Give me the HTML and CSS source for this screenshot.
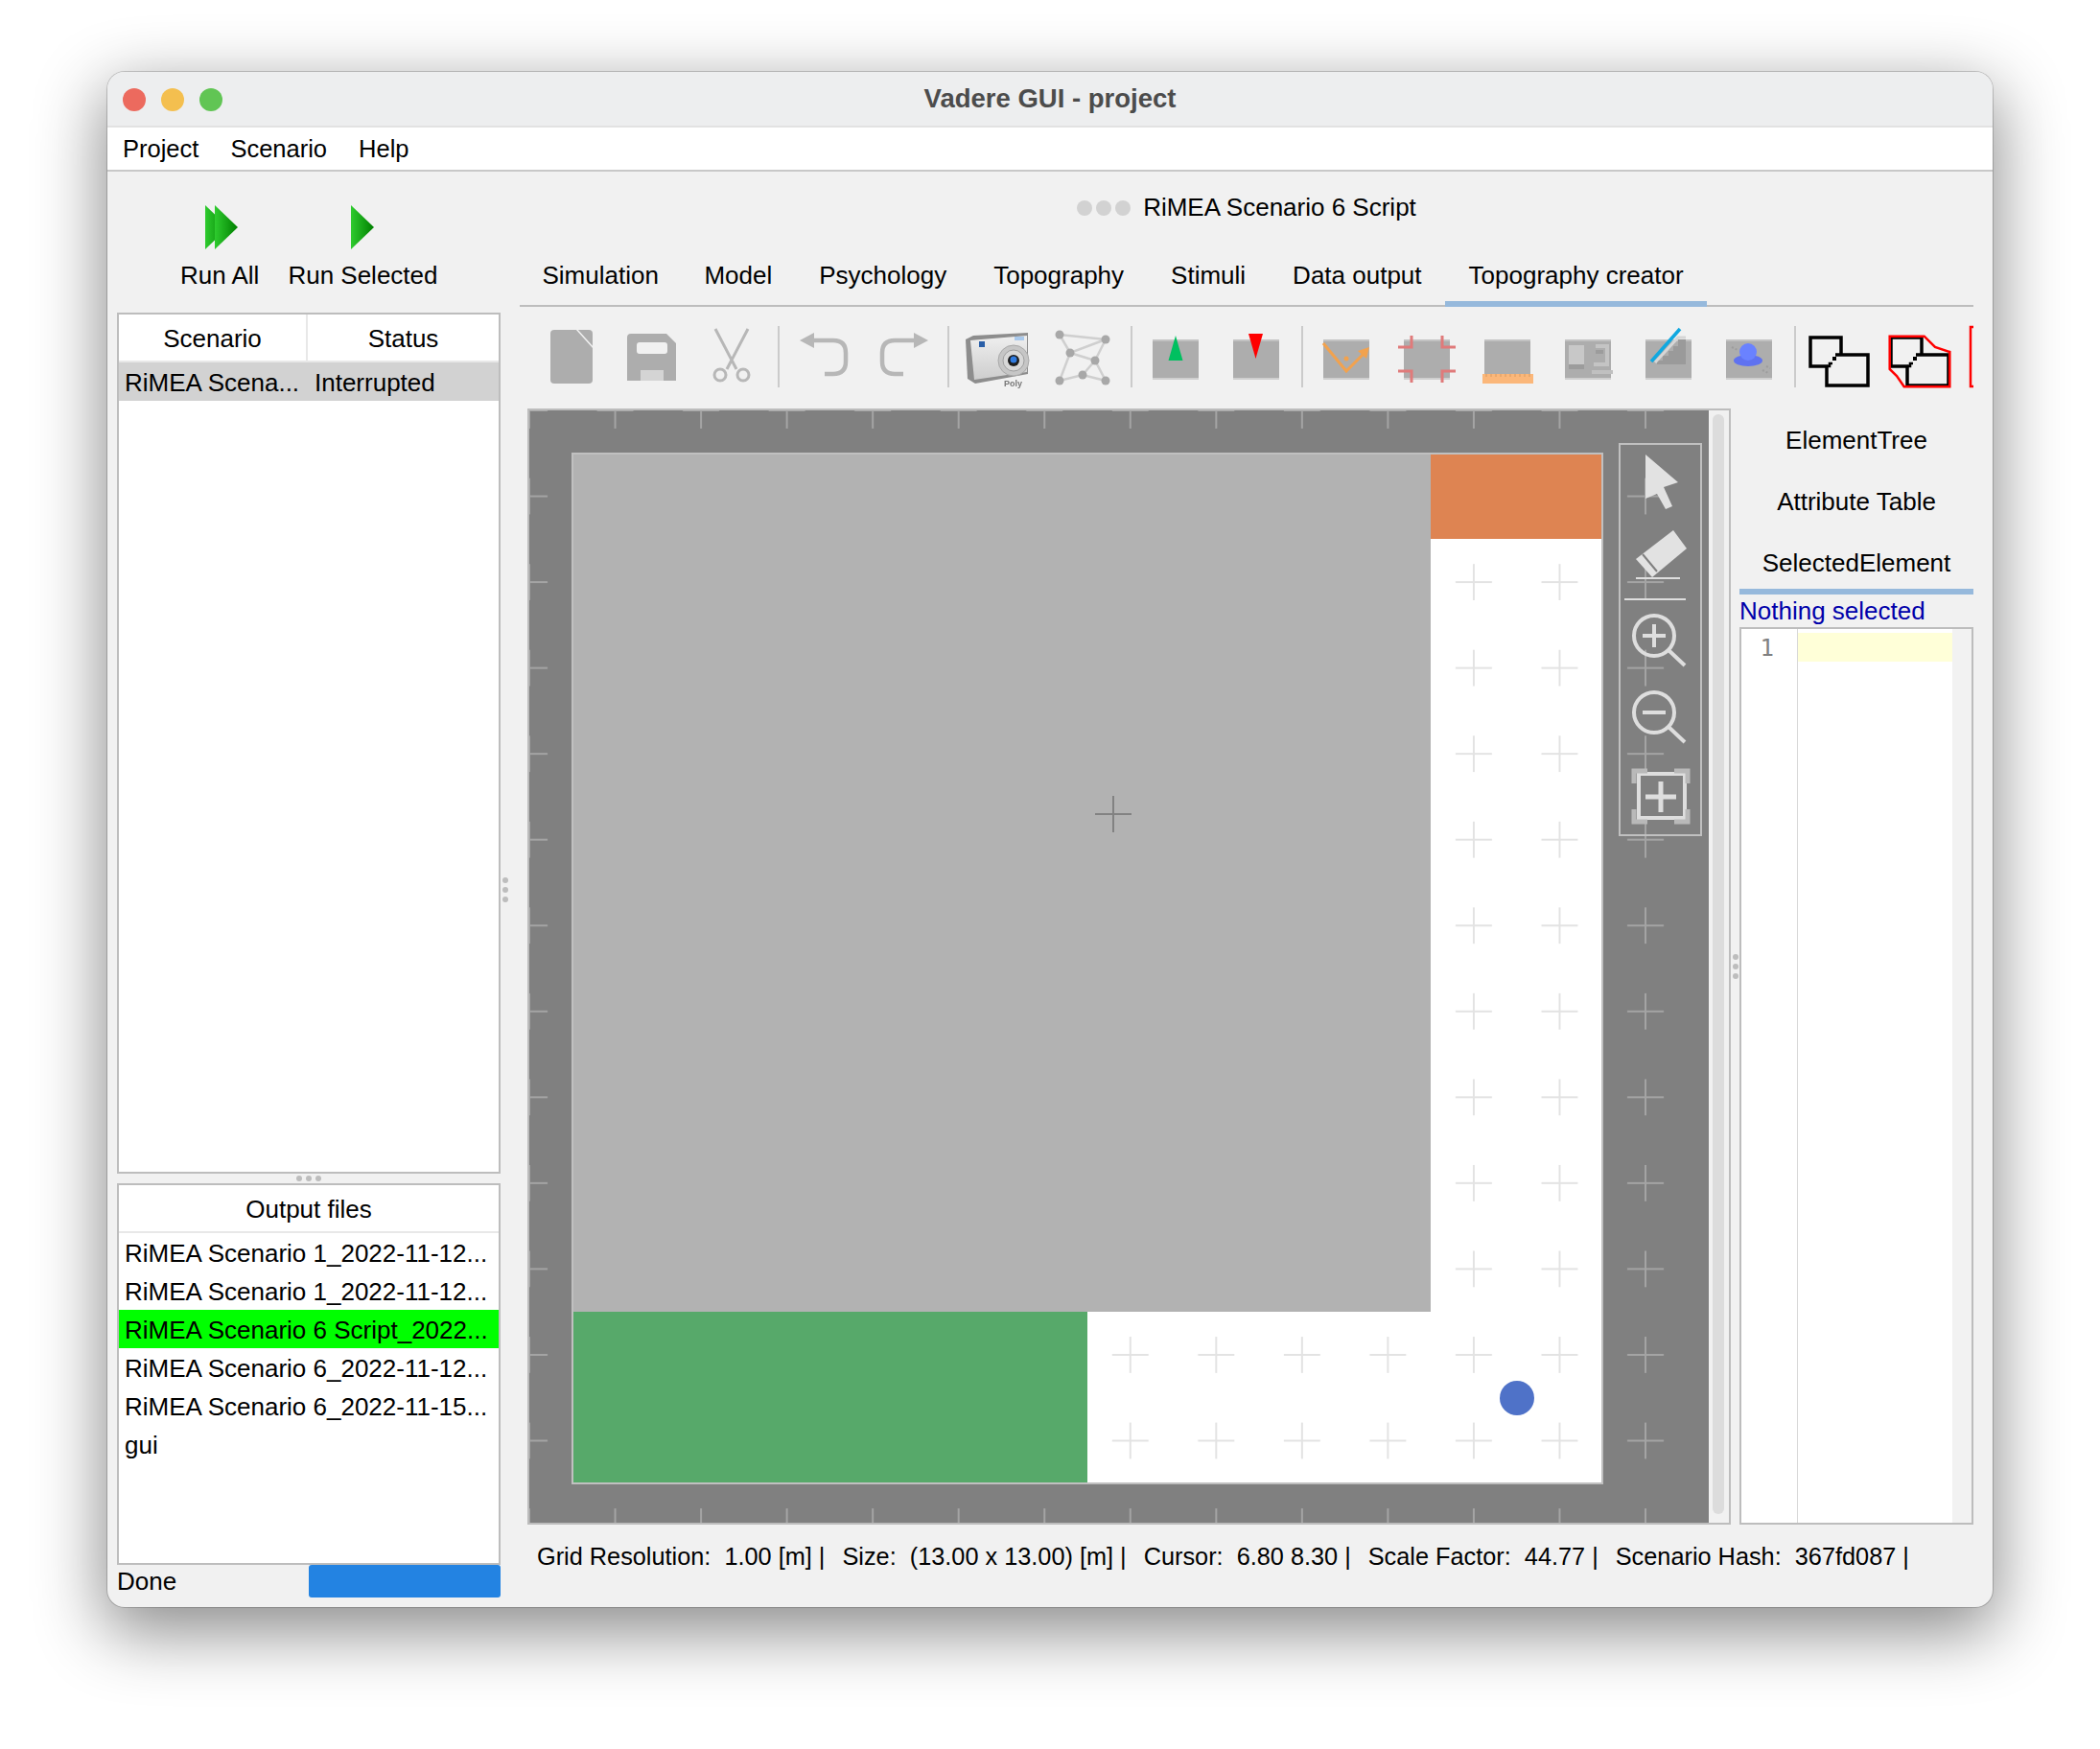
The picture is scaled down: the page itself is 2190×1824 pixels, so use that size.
FILE: index.html
```html
<!DOCTYPE html>
<html lang="en">
<head>
  <meta charset="UTF-8" />
  <title>Vadere GUI - project</title>
  <link rel="stylesheet" href="styles.css">
</head>
<body>

  <svg class="defs" width="0" height="0">
    <defs>
      <linearGradient id="runGreen" x1="0" y1="0" x2="1" y2="0">
        <stop offset="0" stop-color="#2ecb2e" />
        <stop offset="1" stop-color="#007f00" />
      </linearGradient>
      <linearGradient id="camBody" x1="0" y1="0" x2="0" y2="1">
        <stop offset="0" stop-color="#efefef" />
        <stop offset="1" stop-color="#cdcdcd" />
      </linearGradient>
      <pattern id="gridCross" patternUnits="userSpaceOnUse" x="-44.77" y="-44.77" width="89.54" height="89.54">
        <path d="M25.77 44.77H63.77M44.77 25.77V63.77" stroke="rgba(200,200,200,0.5)" stroke-width="2" fill="none" />
      </pattern>
      <g id="tile">
        <rect x="18" y="14" width="48" height="42" fill="#adadad" />
        <rect x="18" y="14" width="48" height="2" fill="#c2c2c2" />
        <rect x="18" y="54" width="48" height="2" fill="#cfcfcf" />
      </g>
    </defs>
  </svg>

  <div class="window">
    <div class="titlebar">
      <div class="lights">
        <span class="light red"></span>
        <span class="light yellow"></span>
        <span class="light green"></span>
      </div>
      <div class="wintitle">Vadere GUI - project</div>
    </div>

    <div class="menubar">
      <span>Project</span>
      <span>Scenario</span>
      <span>Help</span>
    </div>

    <div class="main">
      <div class="left">
        <div class="runbar">
          <div class="runbtn">
            <svg class="run-all" width="34" height="46" viewBox="0 0 34 46">
              <path d="M0 0L24 23L0 46Z" fill="url(#runGreen)" />
              <path d="M10 0L34 23L10 46Z" fill="url(#runGreen)" />
            </svg>
            <span>Run All</span>
          </div>
          <div class="runbtn">
            <svg width="24" height="46" viewBox="0 0 24 46">
              <path d="M0 0L24 23L0 46Z" fill="url(#runGreen)" />
            </svg>
            <span>Run Selected</span>
          </div>
        </div>

        <div class="box scenarios">
          <div class="thead two">
            <div>Scenario</div>
            <div>Status</div>
          </div>
          <div class="trow two selected">
            <div>RiMEA Scena...</div>
            <div>Interrupted</div>
          </div>
        </div>

        <div class="grip grip-h"><i></i><i></i><i></i></div>

        <div class="box outputs">
          <div class="thead"><div>Output files</div></div>
          <div class="trow"><div>RiMEA Scenario 1_2022-11-12...</div></div>
          <div class="trow"><div>RiMEA Scenario 1_2022-11-12...</div></div>
          <div class="trow running"><div>RiMEA Scenario 6 Script_2022...</div></div>
          <div class="trow"><div>RiMEA Scenario 6_2022-11-12...</div></div>
          <div class="trow"><div>RiMEA Scenario 6_2022-11-15...</div></div>
          <div class="trow"><div>gui</div></div>
        </div>

        <div class="progress">
          <span>Done</span>
          <div class="bar"></div>
        </div>
      </div>

      <div class="grip grip-v left-grip"><i></i><i></i><i></i></div>

      <div class="right">
        <div class="scenario-title">
          <div class="grip"><i></i><i></i><i></i></div>
          <span>RiMEA Scenario 6 Script</span>
        </div>

        <div class="tabs">
          <div class="tab first">Simulation</div>
          <div class="tab">Model</div>
          <div class="tab">Psychology</div>
          <div class="tab">Topography</div>
          <div class="tab">Stimuli</div>
          <div class="tab">Data output</div>
          <div class="tab active">Topography creator</div>
        </div>

        <div class="toolbar">
          <!-- new file -->
          <svg class="tool" viewBox="0 0 84 64">
            <rect x="20" y="4" width="44" height="56" rx="4" fill="#adadad" />
            <path d="M47 3L65 23" stroke="#f1f1f1" stroke-width="1.5" />
          </svg>
          <!-- save -->
          <svg class="tool" viewBox="0 0 84 64">
            <path d="M16 12Q16 8 20 8H57L67 18V57H16Z" fill="#adadad" />
            <rect x="26" y="17" width="32" height="12" rx="3" fill="#f1f1f1" />
            <rect x="30" y="46" width="24" height="11" fill="#d4d4d4" />
          </svg>
          <!-- cut -->
          <svg class="tool line" viewBox="0 0 84 64">
            <path d="M24 3L46 45M58 3L36 45" />
            <circle cx="29" cy="51" r="6" />
            <circle cx="53" cy="51" r="6" />
          </svg>
          <span class="sep sep-a"></span>
          <!-- undo -->
          <svg class="tool line thick" viewBox="0 0 84 64">
            <path d="M30 15H52Q65 15 65 28V37Q65 50 52 50H43" />
            <path class="solid" d="M17 15L32 7V23Z" />
          </svg>
          <!-- redo -->
          <svg class="tool line thick" viewBox="0 0 84 64">
            <g transform="translate(84,0) scale(-1,1)">
              <path d="M30 15H52Q65 15 65 28V37Q65 50 52 50H43" />
              <path class="solid" d="M17 15L32 7V23Z" />
            </g>
          </svg>
          <span class="sep sep-b"></span>
          <!-- camera -->
          <svg class="tool soft" viewBox="0 0 84 64">
            <path d="M10 14L18 10L75 7V50L20 60L12 55Z" fill="#8d8d8d" />
            <path d="M15 15L74 10V48L19 56Z" fill="url(#camBody)" />
            <rect x="24" y="16" width="6" height="6" fill="#2a5fa8" />
            <rect x="61" y="11" width="10" height="4" fill="#a9c9ec" />
            <circle cx="60" cy="36" r="16" fill="#c6c6c6" stroke="#a8a8a8" />
            <circle cx="60" cy="36" r="11" fill="#d8d8d8" stroke="#a0a0a0" />
            <circle cx="60" cy="36" r="6" fill="#1c1c1c" />
            <circle cx="60" cy="35" r="3.5" fill="#2f7be0" />
            <text class="polytext" x="50" y="63">Poly</text>
          </svg>
          <!-- network -->
          <svg class="tool net soft" viewBox="0 0 84 64">
            <path class="edges" d="M18 9L66 14L29 28L18 9M29 28L55 36L66 14M29 28L18 57L42 51L66 57L55 36L42 51" />
            <circle cx="18" cy="9" r="4.5" />
            <circle cx="66" cy="14" r="4.5" />
            <circle cx="29" cy="28" r="4.5" />
            <circle cx="55" cy="36" r="4.5" />
            <circle cx="42" cy="51" r="4.5" />
            <circle cx="18" cy="57" r="4.5" />
            <circle cx="66" cy="57" r="4.5" />
          </svg>
          <span class="sep sep-c"></span>
          <!-- add pedestrian up -->
          <svg class="tool" viewBox="0 0 84 64">
            <use href="#tile" />
            <path d="M42 10L49.500 36H34.500Z" fill="#00c060" />
          </svg>
          <!-- add pedestrian down -->
          <svg class="tool" viewBox="0 0 84 64">
            <use href="#tile" />
            <path d="M34 8H49L41.500 34Z" fill="#ff0000" />
          </svg>
          <span class="sep sep-d"></span>
          <!-- source path -->
          <svg class="tool" viewBox="0 0 84 64">
            <use href="#tile" />
            <path d="M18 18L42 47L62 27" fill="none" stroke="#f2a24e" stroke-width="3" />
            <path d="M66 22L54 26L63 34Z" fill="#f2a24e" />
            <circle cx="42" cy="34" r="2.500" fill="#f2a24e" />
          </svg>
          <!-- crop marks -->
          <svg class="tool" viewBox="0 0 84 64">
            <use href="#tile" />
            <path d="M12 22H26V10M72 22H58V10M12 47H26V59M72 47H58V59" fill="none" stroke="#e07a7a" stroke-width="3" />
          </svg>
          <!-- ruler -->
          <svg class="tool" viewBox="0 0 84 64">
            <use href="#tile" />
            <rect x="16" y="50" width="53" height="10" fill="#fbb77a" />
            <path d="M20 50v3M25 50v3M30 50v3M35 50v3M40 50v3M45 50v3M50 50v3M55 50v3M60 50v3M65 50v3" stroke="#d89a60" stroke-width="1" />
          </svg>
          <!-- blocks -->
          <svg class="tool" viewBox="0 0 84 64">
            <use href="#tile" />
            <rect x="22" y="20" width="16" height="20" fill="#c8c8c8" />
            <rect x="22" y="40" width="16" height="5" fill="#9c9c9c" />
            <path d="M50 21H62V40H48" fill="none" stroke="#c4c4c4" stroke-width="4" />
            <rect x="50" y="25" width="8" height="4" fill="#9c9c9c" />
            <rect x="46" y="46" width="22" height="4" fill="#c0c0c0" />
          </svg>
          <!-- stairs -->
          <svg class="tool" viewBox="0 0 84 64">
            <use href="#tile" />
            <path d="M30 40V36H36V31H42V26H47V21H52V14H60V40Z" fill="#9a9a9a" />
            <path d="M28 38L52 12H60" fill="none" stroke="#d6d6d6" stroke-width="3" />
            <path d="M24 37L54 3" stroke="#10a8e0" stroke-width="3.500" />
          </svg>
          <!-- hat -->
          <svg class="tool" viewBox="0 0 84 64">
            <use href="#tile" />
            <ellipse cx="41" cy="36" rx="15" ry="6" fill="#5f72f0" />
            <ellipse cx="41" cy="27" rx="9" ry="9" fill="#6a82ff" />
            <path d="M24 22l6 3M56 46l6 3M60 42l4 2" stroke="#9c9c9c" stroke-width="2" stroke-dasharray="2 2" />
          </svg>
          <span class="sep sep-d"></span>
          <!-- merge -->
          <svg class="tool" viewBox="0 0 84 64">
            <path d="M38 30H44V12H12V42H29V62H72V30H44" fill="none" stroke="#000" stroke-width="3.500" />
            <path d="M29 42H32V39H35" fill="none" stroke="#000" stroke-width="2.500" />
            <rect x="35" y="32" width="4" height="4" fill="#000" />
          </svg>
          <!-- convex hull -->
          <svg class="tool" viewBox="0 0 84 64">
            <path d="M38 30H44V12H12V42H29V62H72V30H44" fill="none" stroke="#000" stroke-width="3.500" />
            <path d="M29 42H32V39H35" fill="none" stroke="#000" stroke-width="2.500" />
            <rect x="35" y="32" width="4" height="4" fill="#000" />
            <path d="M10.700 10.700H46.700L58 22L73.300 27V63.300H25.700L18 52L10.700 45Z" fill="none" stroke="#ff0000" stroke-width="2.500" />
          </svg>
          <!-- cut off by the window -->
          <svg class="tool" viewBox="0 0 84 64">
            <path d="M16 1H11V63H16" fill="none" stroke="#ff0000" stroke-width="2.500" />
          </svg>
        </div>

        <div class="workspace">
          <div class="canvas-frame">
            <svg class="canvas" width="1230" height="1160" viewBox="0 0 1230 1160">
              <rect width="1230" height="1160" fill="#808080" />
              <rect x="45" y="45" width="1074" height="1074" fill="#fff" stroke="#c0c0c0" stroke-width="2" />
              <rect width="1230" height="1160" fill="url(#gridCross)" />
              <rect x="46" y="46" width="894" height="894" fill="#b2b2b2" />
              <rect x="940" y="46" width="178" height="88" fill="#de8452" />
              <rect x="46" y="940" width="536" height="178" fill="#57a96a" />
              <circle cx="1030" cy="1030" r="18" fill="#4f72c8" />
              <path d="M590 421H628M609 402V440" stroke="#828282" stroke-width="2" />
            </svg>
            <div class="scrollbar"><div class="thumb"></div></div>

            <div class="toolbox">
              <svg width="87" height="410" viewBox="0 0 87 410">
                <path class="fill" d="M28 12L62 41L47 46L56 66L49 69L40 53L28 58Z" />
                <path class="fill" d="M57 91L71 110L35 140L18 121Z" />
                <path d="M25 116L40 134" stroke="#808080" stroke-width="2" />
                <path class="stroke thin" d="M18 141H64M6 163H70" />
                <circle class="stroke" cx="37" cy="201" r="21" />
                <path class="stroke" d="M25 201H49M37 189V213M52 216L69 232" />
                <circle class="stroke" cx="37" cy="281" r="21" />
                <path class="stroke" d="M25 281H49M52 296L69 312" />
                <rect class="stroke" x="21" y="345" width="48" height="46" />
                <path class="stroke bold" d="M28 369H60M44 353V385" />
                <path class="corners" d="M16 355V342H30M58 342H72V355M16 382V395H30M58 395H72V382" />
              </svg>
            </div>
          </div>

          <div class="grip grip-v"><i></i><i></i><i></i></div>

          <div class="side">
            <div class="side-tab">ElementTree</div>
            <div class="side-tab">Attribute Table</div>
            <div class="side-tab">SelectedElement</div>
            <div class="side-rule"></div>
            <div class="side-label">Nothing selected</div>
            <div class="editor">
              <div class="gutter">1</div>
              <div class="code"><div class="current-line"></div></div>
              <div class="editor-strip"></div>
            </div>
          </div>
        </div>

        <div class="statusbar">
          <span>Grid Resolution:  1.00 [m] |</span>
          <span>Size:  (13.00 x 13.00) [m] |</span>
          <span>Cursor:  6.80 8.30 |</span>
          <span>Scale Factor:  44.77 |</span>
          <span>Scenario Hash:  367fd087 |</span>
        </div>
      </div>
    </div>
  </div>
</body>
</html>
```

FILE: styles.css
```css
* {
  box-sizing: border-box;
}
body {
  margin: 0;
  min-height: 1824px;
  padding: 75px 0 0 112px;
  background: #fff;
  font-family: "Liberation Sans", Arial, sans-serif;
  font-size: 26px;
  color: #000;
}
.defs {
  position: absolute;
}

.window {
  width: 1966px;
  height: 1601px;
  background: #f1f1f1;
  border-radius: 18px;
  box-shadow: 0 0 0 1px rgba(0,0,0,0.18), 0 22px 70px 4px rgba(0,0,0,0.46);
  display: flex;
  flex-direction: column;
  overflow: hidden;
}

.titlebar {
  height: 58px;
  flex: none;
  display: flex;
  align-items: center;
  justify-content: center;
  background: #edeeef;
  border-bottom: 2px solid #e2e2e2;
  position: relative;
}
.lights {
  position: absolute;
  left: 16px;
  top: 17px;
  display: flex;
  gap: 16px;
}
.light {
  width: 24px;
  height: 24px;
  border-radius: 50%;
}
.light.red { background: #ec6a5e; }
.light.yellow { background: #f4bf4f; }
.light.green { background: #61c554; }
.wintitle {
  font-size: 27.5px;
  font-weight: bold;
  color: #4c4c4c;
}

.menubar {
  height: 46px;
  flex: none;
  display: flex;
  align-items: center;
  gap: 33px;
  padding-left: 16px;
  background: #fff;
  border-bottom: 2px solid #c8c8c8;
  font-size: 25.5px;
}

.main {
  flex: 1;
  display: flex;
  min-height: 0;
  padding-left: 10px;
}

/* left column */
.left {
  width: 400px;
  flex: none;
  display: flex;
  flex-direction: column;
}
.runbar {
  height: 147px;
  flex: none;
  display: flex;
  gap: 30px;
  padding: 35px 0 0 66px;
}
.runbtn {
  display: flex;
  flex-direction: column;
  align-items: center;
  gap: 12px;
  line-height: 30px;
}
.run-all {
  margin-left: 3px;
}
.box {
  background: #fff;
  border: 2px solid #bdbdbd;
}
.scenarios {
  height: 898px;
  flex: none;
}
.outputs {
  height: 398px;
  flex: none;
}
.thead {
  height: 50px;
  display: flex;
  align-items: center;
  justify-content: center;
  text-align: center;
  border-bottom: 2px solid #e8e8e8;
}
.thead div {
  flex: 1;
  height: 48px;
  line-height: 50px;
}
.thead.two div:first-child {
  flex: none;
  width: 197px;
  border-right: 2px solid #e8e8e8;
}
.trow {
  height: 40px;
  line-height: 42px;
  padding-left: 6px;
  white-space: nowrap;
}
.trow.two {
  display: flex;
}
.trow.two div:first-child {
  width: 198px;
}
.trow.selected {
  background: #d2d2d2;
}
.trow.running {
  background: #00ff00;
}
.progress {
  flex: none;
  height: 34px;
  display: flex;
  align-items: center;
  justify-content: space-between;
}
.bar {
  width: 200px;
  height: 34px;
  background: #2383e2;
  border-radius: 3px;
}

/* little dot handles between panes */
.grip {
  display: flex;
  justify-content: center;
  align-items: center;
  gap: 4px;
}
.grip i {
  width: 6px;
  height: 6px;
  border-radius: 50%;
  background: #bdbdbd;
}
.grip-h {
  height: 10px;
  flex: none;
}
.grip-v {
  flex-direction: column;
  flex: none;
  width: 9px;
}
.left-grip {
  width: 20px;
  padding-right: 11px;
}

/* right column */
.right {
  width: 1516px;
  flex: none;
  display: flex;
  flex-direction: column;
  min-height: 0;
}
.scenario-title {
  height: 73px;
  flex: none;
  display: flex;
  align-items: center;
  justify-content: center;
  gap: 13px;
  padding-top: 2px;
}
.scenario-title .grip {
  gap: 4px;
}
.scenario-title .grip i {
  width: 16px;
  height: 16px;
  background: #d2d2d2;
}

.tabs {
  height: 68px;
  flex: none;
  display: flex;
  border-bottom: 2px solid #bdbdbd;
}
.tab {
  padding: 0 24.5px;
  line-height: 70px;
  height: 68px;
  white-space: nowrap;
}
.tab.first {
  margin-left: -1px;
  padding-right: 23px;
}
.tab.active {
  border-bottom: 6px solid #96b9dc;
}

.toolbar {
  height: 106px;
  flex: none;
  display: flex;
  align-items: flex-start;
  padding: 20px 0 0 12px;
  overflow: hidden;
}
.tool {
  width: 84px;
  height: 64px;
  flex: none;
  overflow: visible;
}
.tool.soft {
  filter: blur(0.5px);
}
.tool.line path, .tool.line circle {
  fill: none;
  stroke: #b7b7b7;
  stroke-width: 3;
}
.tool.thick path {
  stroke-width: 4.5;
}
.tool.line path.solid {
  fill: #b7b7b7;
  stroke: none;
}
.tool.net {
  margin-left: 6px;
}
.tool.net circle {
  fill: #a8a8a8;
}
.tool.net .edges {
  fill: none;
  stroke: #cfcfcf;
  stroke-width: 2.5;
}
.polytext {
  font-size: 9px;
  font-weight: bold;
  fill: #777;
}
.sep {
  width: 2px;
  height: 64px;
  flex: none;
  background: #cbcbcb;
}
.sep-a { margin: 0 4px 0 5px; }
.sep-b { margin: 0 7px 0 3px; }
.sep-c { margin: 0 3px 0 8px; }
.sep-d { margin: 0 3px 0 5px; }

.workspace {
  flex: none;
  height: 1164px;
  display: flex;
  margin-left: 8px;
}
.canvas-frame {
  width: 1255px;
  flex: none;
  display: flex;
  border: 2px solid #bdbdbd;
  position: relative;
}
.canvas {
  display: block;
  flex: none;
}
.scrollbar {
  flex: 1;
  padding: 4px;
  background: #f1f1f1;
}
.thumb {
  width: 12px;
  height: 1147px;
  background: #dcdcdc;
  border-radius: 6px;
}
.toolbox {
  position: absolute;
  left: 1136px;
  top: 34px;
  width: 87px;
  height: 410px;
  border: 2px solid #c0c0c0;
}
.toolbox svg {
  display: block;
  margin: -2px;
}
.toolbox .fill {
  fill: #e2e2e2;
}
.toolbox .stroke {
  fill: none;
  stroke: #dedede;
  stroke-width: 4;
}
.toolbox .thin {
  stroke-width: 2;
}
.toolbox .bold {
  stroke-width: 5;
}
.toolbox .corners {
  fill: none;
  stroke: #b9b9b9;
  stroke-width: 5;
}

.side {
  width: 244px;
  flex: none;
  display: flex;
  flex-direction: column;
  padding-top: 1px;
}
.side-tab {
  height: 64px;
  flex: none;
  line-height: 64px;
  text-align: center;
  white-space: nowrap;
}
.side-rule {
  height: 6px;
  flex: none;
  margin-top: -5px;
  background: #96b9dc;
}
.side-label {
  height: 34px;
  flex: none;
  line-height: 34px;
  color: #0000aa;
}
.editor {
  flex: 1;
  display: flex;
  background: #fff;
  border: 2px solid #bdbdbd;
}
.gutter {
  width: 59px;
  flex: none;
  border-right: 1px solid #d8d8d8;
  padding: 5px 24px 0 0;
  text-align: right;
  font-family: "DejaVu Sans Mono", monospace;
  font-size: 24px;
  line-height: 30px;
  color: #808080;
}
.code {
  flex: 1;
  padding-top: 4px;
}
.current-line {
  height: 30px;
  background: #ffffd8;
}
.editor-strip {
  width: 20px;
  flex: none;
  background: #f2f2f2;
}

.statusbar {
  display: flex;
  gap: 18px;
  padding: 18px 0 0 18px;
  font-size: 25.3px;
  line-height: 30px;
  white-space: pre;
}
```
